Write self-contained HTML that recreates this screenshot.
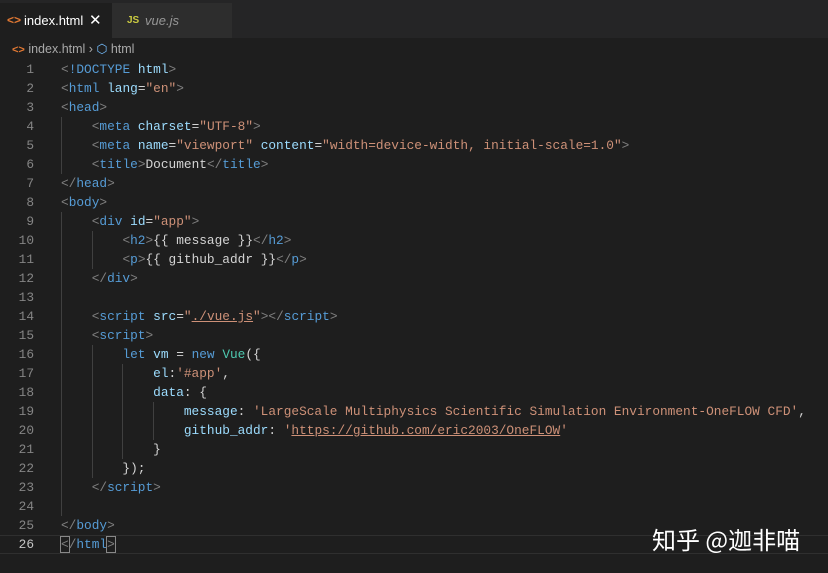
<!DOCTYPE html>
<html><head><style>
body{margin:0;width:828px;height:573px;background:#1e1e1e;overflow:hidden;position:relative;font-family:"Liberation Sans",sans-serif}
.tabs{position:absolute;left:0;top:0;width:828px;height:38px;background:#252526}
.tab{position:absolute;top:3px;height:35px;font-size:13px;line-height:35px}
.t1{left:0;width:112px;background:#1e1e1e;color:#fff}
.t2{left:112px;width:120px;background:#2d2d2d;color:#969696;font-style:italic}
.bc{position:absolute;top:40px;left:12px;font-size:12.5px;color:#a9a9a9;line-height:18px}
.code{position:absolute;left:0;top:60px;font-family:"Liberation Mono",monospace;font-size:12.8px;line-height:19px;color:#d4d4d4;white-space:pre}
.ln{position:absolute;left:0;width:34px;text-align:right;color:#858585}
.l{position:absolute;left:61px}
.g{color:#808080}.t{color:#569cd6}.a{color:#9cdcfe}.s{color:#ce9178}.c{color:#4ec9b0}
.cur{position:absolute;left:0;top:535px;width:828px;height:17px;border-top:1px solid #2f2f2f;border-bottom:1px solid #2f2f2f}
.guide{position:absolute;width:1px;background:#404040}
.wm{position:absolute;left:652px;top:521px;color:#fff;font-family:"Noto Sans CJK SC",sans-serif;font-size:24px}
</style></head><body>
<div class="tabs">
<div class="tab t1"><span style="color:#e37933;position:absolute;left:7px;font-size:12px;font-weight:bold">&lt;&gt;</span><span style="position:absolute;left:24px">index.html</span><span style="position:absolute;left:89px;font-size:15px">✕</span></div>
<div class="tab t2"><span style="color:#cbcb41;font-style:normal;font-weight:bold;font-size:10px;position:absolute;left:15px">JS</span><span style="position:absolute;left:33px">vue.js</span></div>
</div>
<div class="bc"><span style="color:#e37933;font-weight:bold;font-size:11px">&lt;&gt;</span> index.html <span>›</span> <span style="color:#75beff">⬡</span> html</div>
<div class="cur"></div>
<div class="guide" style="left:61px;top:117px;height:57px"></div>
<div class="guide" style="left:61px;top:212px;height:304px"></div>
<div class="guide" style="left:92px;top:231px;height:38px"></div>
<div class="guide" style="left:92px;top:345px;height:133px"></div>
<div class="guide" style="left:122px;top:364px;height:95px"></div>
<div class="guide" style="left:153px;top:402px;height:38px"></div>
<div class="code">
<div class="ln" style="top:0">1</div><div class="l" style="top:0"><span class="g">&lt;</span><span class="t">!DOCTYPE</span> <span class="a">html</span><span class="g">&gt;</span></div>
<div class="ln" style="top:19px">2</div><div class="l" style="top:19px"><span class="g">&lt;</span><span class="t">html</span> <span class="a">lang</span>=<span class="s">"en"</span><span class="g">&gt;</span></div>
<div class="ln" style="top:38px">3</div><div class="l" style="top:38px"><span class="g">&lt;</span><span class="t">head</span><span class="g">&gt;</span></div>
<div class="ln" style="top:57px">4</div><div class="l" style="top:57px">    <span class="g">&lt;</span><span class="t">meta</span> <span class="a">charset</span>=<span class="s">"UTF-8"</span><span class="g">&gt;</span></div>
<div class="ln" style="top:76px">5</div><div class="l" style="top:76px">    <span class="g">&lt;</span><span class="t">meta</span> <span class="a">name</span>=<span class="s">"viewport"</span> <span class="a">content</span>=<span class="s">"width=device-width, initial-scale=1.0"</span><span class="g">&gt;</span></div>
<div class="ln" style="top:95px">6</div><div class="l" style="top:95px">    <span class="g">&lt;</span><span class="t">title</span><span class="g">&gt;</span>Document<span class="g">&lt;/</span><span class="t">title</span><span class="g">&gt;</span></div>
<div class="ln" style="top:114px">7</div><div class="l" style="top:114px"><span class="g">&lt;/</span><span class="t">head</span><span class="g">&gt;</span></div>
<div class="ln" style="top:133px">8</div><div class="l" style="top:133px"><span class="g">&lt;</span><span class="t">body</span><span class="g">&gt;</span></div>
<div class="ln" style="top:152px">9</div><div class="l" style="top:152px">    <span class="g">&lt;</span><span class="t">div</span> <span class="a">id</span>=<span class="s">"app"</span><span class="g">&gt;</span></div>
<div class="ln" style="top:171px">10</div><div class="l" style="top:171px">        <span class="g">&lt;</span><span class="t">h2</span><span class="g">&gt;</span>{{ message }}<span class="g">&lt;/</span><span class="t">h2</span><span class="g">&gt;</span></div>
<div class="ln" style="top:190px">11</div><div class="l" style="top:190px">        <span class="g">&lt;</span><span class="t">p</span><span class="g">&gt;</span>{{ github_addr }}<span class="g">&lt;/</span><span class="t">p</span><span class="g">&gt;</span></div>
<div class="ln" style="top:209px">12</div><div class="l" style="top:209px">    <span class="g">&lt;/</span><span class="t">div</span><span class="g">&gt;</span></div>
<div class="ln" style="top:228px">13</div>
<div class="ln" style="top:247px">14</div><div class="l" style="top:247px">    <span class="g">&lt;</span><span class="t">script</span> <span class="a">src</span>=<span class="s">"<u>./vue.js</u>"</span><span class="g">&gt;&lt;/</span><span class="t">script</span><span class="g">&gt;</span></div>
<div class="ln" style="top:266px">15</div><div class="l" style="top:266px">    <span class="g">&lt;</span><span class="t">script</span><span class="g">&gt;</span></div>
<div class="ln" style="top:285px">16</div><div class="l" style="top:285px">        <span class="t">let</span> <span class="a">vm</span> = <span class="t">new</span> <span class="c">Vue</span>({</div>
<div class="ln" style="top:304px">17</div><div class="l" style="top:304px">            <span class="a">el</span>:<span class="s">'#app'</span>,</div>
<div class="ln" style="top:323px">18</div><div class="l" style="top:323px">            <span class="a">data</span>: {</div>
<div class="ln" style="top:342px">19</div><div class="l" style="top:342px">                <span class="a">message</span>: <span class="s">'LargeScale Multiphysics Scientific Simulation Environment-OneFLOW CFD'</span>,</div>
<div class="ln" style="top:361px">20</div><div class="l" style="top:361px">                <span class="a">github_addr</span>: <span class="s">'<u>https://github.com/eric2003/OneFLOW</u>'</span></div>
<div class="ln" style="top:380px">21</div><div class="l" style="top:380px">            }</div>
<div class="ln" style="top:399px">22</div><div class="l" style="top:399px">        });</div>
<div class="ln" style="top:418px">23</div><div class="l" style="top:418px">    <span class="g">&lt;/</span><span class="t">script</span><span class="g">&gt;</span></div>
<div class="ln" style="top:437px">24</div>
<div class="ln" style="top:456px">25</div><div class="l" style="top:456px"><span class="g">&lt;/</span><span class="t">body</span><span class="g">&gt;</span></div>
<div class="ln" style="top:475px;color:#c6c6c6">26</div><div class="l" style="top:475px"><span class="g" style="outline:1px solid #888">&lt;</span><span class="g">/</span><span class="t">html</span><span class="g" style="outline:1px solid #888">&gt;</span></div>
</div>
<div class="wm">知乎 @迦非喵</div>
</body></html>
